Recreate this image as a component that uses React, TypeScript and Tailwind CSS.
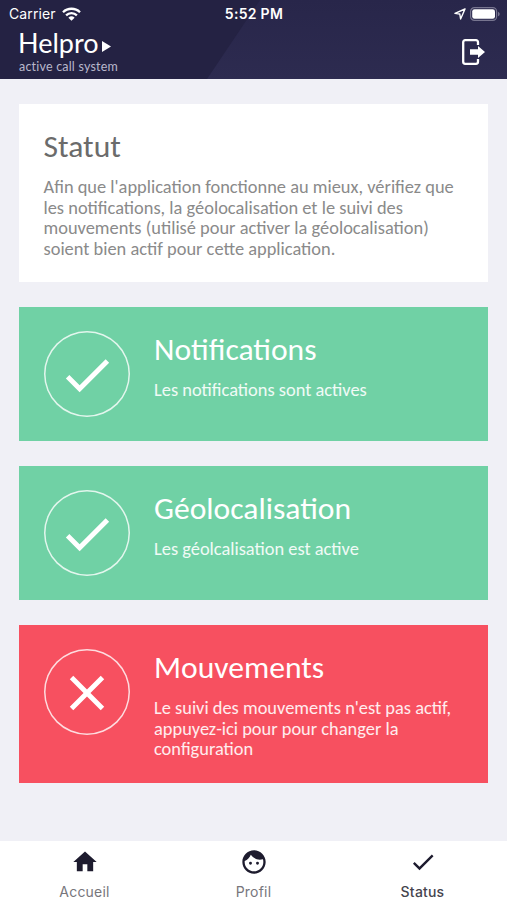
import type { IconType } from 'react-icons';
import { MdCheck, MdClose, MdFace, MdHome } from 'react-icons/md';

function StatusBar() {
    return (
        <div className="grid grid-cols-3 items-center h-[27px] pl-[9px] pr-[7px] font-['Inter',sans-serif] text-[14px] leading-none">
            <div className="flex items-center gap-[6px]">
                <span className="tracking-[0.1px]">Carrier</span>
                <svg className="w-[19px] h-[14px]" viewBox="0 0 19 14" fill="none" stroke="currentColor" strokeWidth="2.3">
                    <path d="M1 5.2a12.2 12.2 0 0 1 17 0" />
                    <path d="M4.1 8.4a7.7 7.7 0 0 1 10.8 0" />
                    <path d="M9.5 13.8 6.4 10.7a4.5 4.5 0 0 1 6.2 0z" fill="currentColor" stroke="none" />
                </svg>
            </div>
            <span className="-ml-px text-center font-semibold tracking-[0.3px] whitespace-nowrap">5:52 PM</span>
            <div className="flex items-center justify-end gap-[4px]">
                <svg className="w-[12px] h-[12px]" viewBox="0 0 12 12" fill="none" stroke="currentColor" strokeWidth="1.4" strokeLinejoin="round">
                    <path d="M11 1 1 5.4l4.8.6.8 5z" />
                </svg>
                <svg className="w-[30px] h-[14px]" viewBox="0 0 30 14">
                    <rect x="0.6" y="0.6" width="26" height="12.8" rx="3.8" fill="none" stroke="#77758f" strokeWidth="1.2" />
                    <rect x="2.2" y="2.2" width="22.8" height="9.6" rx="2.3" fill="#fff" />
                    <path d="M28 4.7v4.6c1-.4 1.7-1.3 1.7-2.3s-.7-1.9-1.7-2.3z" fill="#77758f" />
                </svg>
            </div>
        </div>
    );
}

function Header() {
    return (
        <header className="relative h-[79px] shrink-0 bg-linear-to-b from-[#28264a] to-[#2d2b50] text-white">
            <svg className="absolute inset-0" width="507" height="79" viewBox="0 0 507 79">
                <path d="M0 0h260l-53 79H0z" fill="#242243" />
            </svg>
            <div className="relative">
                <StatusBar />
                <div className="flex justify-between pl-[18px] pr-[22px]">
                    <div className="font-['Lato',sans-serif]">
                        <div className="flex items-center gap-[3px] h-[32px]">
                            <span className="w-[81px] text-[27px] leading-[32px]">Helpro</span>
                            <svg className="w-[9px] h-[11px] mt-[6px]" viewBox="0 0 9 11" fill="currentColor">
                                <path d="M0 0l9 5.5-9 5.5z" />
                            </svg>
                        </div>
                        <div className="pl-px text-[12.5px] leading-[16px] tracking-[0.2px] text-[#b9b8cc]">active call system</div>
                    </div>
                    <svg className="w-[23px] h-[26px] mt-[12px]" viewBox="0 0 23 26" fill="none">
                        <path d="M16 6V3.2a2 2 0 0 0-2-2H3.2a2 2 0 0 0-2 2v19.6a2 2 0 0 0 2 2H14a2 2 0 0 0 2-2V20" stroke="currentColor" strokeWidth="2.3" />
                        <path d="M8 10.2h8V7l7 6-7 6v-3.2H8z" fill="currentColor" />
                    </svg>
                </div>
            </div>
        </header>
    );
}

function StatusCard(props: { title: string; text: string; active: boolean }) {
    const Icon = props.active ? MdCheck : MdClose;

    return (
        <section className={`flex gap-[24.5px] px-[24.5px] pt-[24px] text-white ${props.active ? 'h-[134px] bg-[#70d1a5]' : 'h-[158px] bg-[#f75060]'}`}>
            <div className="grid place-items-center w-[86px] h-[86px] shrink-0 rounded-full shadow-[inset_0_0_0_1.5px_#ffffffcc]">
                <Icon className="size-[59px] translate-x-[0.5px] translate-y-[0.5px]" />
            </div>
            <div className="-mr-4">
                <h2 className="text-[31.6px] leading-[37px] whitespace-nowrap">{props.title}</h2>
                <p className="mt-[12px] text-[18.4px] leading-[20.5px] text-white/90">{props.text}</p>
            </div>
        </section>
    );
}

function Tab(props: { icon: IconType; label: string; selected?: boolean }) {
    return (
        <button type="button" className="flex flex-col items-center pt-[6.5px]">
            <props.icon className="size-[28px] text-[#1d1b2e]" />
            <span className={`mt-[7px] text-[14px] leading-[18px] tracking-[0.2px] ${props.selected ? 'font-medium text-[#45444d]' : 'text-[#77767c]'}`}>
                {props.label}
            </span>
        </button>
    );
}

function App() {
    return (
        <div className="flex flex-col w-[507px] h-[900px] overflow-hidden bg-[#f0f0f6]">
            <Header />
            <main className="flex flex-col flex-1 gap-[25px] px-[19px] pt-[25px] font-['Carlito','Lato',sans-serif]">
                <section className="h-[178px] px-[24.5px] pt-[24px] bg-white">
                    <h1 className="text-[31.6px] leading-[37px] text-[#6b6b6b]">Statut</h1>
                    <p className="mt-[12px] text-[18.4px] leading-[20.5px] text-[#8a8a8a]">
                        Afin que l'application fonctionne au mieux, vérifiez que
                        <br />
                        les notifications, la géolocalisation et le suivi des
                        <br />
                        mouvements (utilisé pour activer la géolocalisation)
                        <br />
                        soient bien actif pour cette application.
                    </p>
                </section>
                <StatusCard title="Notifications" text="Les notifications sont actives" active />
                <StatusCard title="Géolocalisation" text="Les géolcalisation est active" active />
                <StatusCard
                    title="Mouvements"
                    text="Le suivi des mouvements n'est pas actif, appuyez-ici pour pour changer la configuration"
                    active={false}
                />
            </main>
            <nav className="grid grid-cols-3 h-[59px] bg-white font-['Inter',sans-serif]">
                <Tab icon={MdHome} label="Accueil" />
                <Tab icon={MdFace} label="Profil" />
                <Tab icon={MdCheck} label="Status" selected />
            </nav>
        </div>
    );
}

export default App;
